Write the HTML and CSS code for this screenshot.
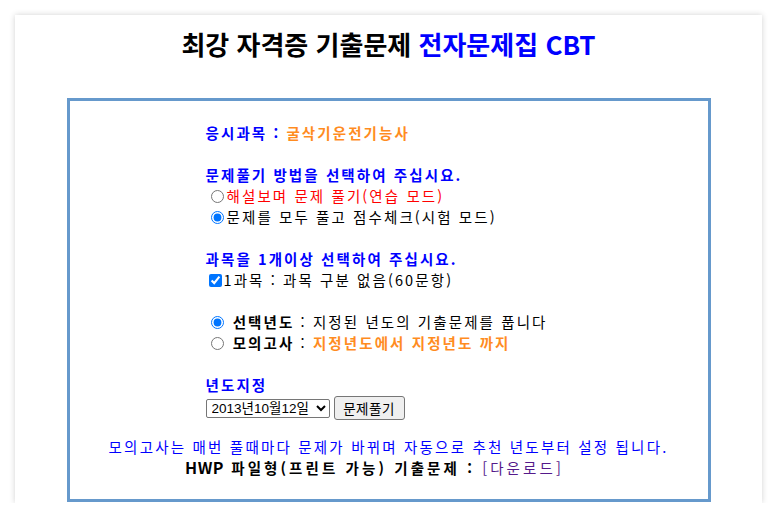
FILE: index.html
```html
<!DOCTYPE html>
<html lang="ko">
<head>
<meta charset="utf-8">
<title>최강 자격증 기출문제 전자문제집 CBT</title>
<link rel="stylesheet" href="styles.css">
</head>
<body>
<div class="card">
  <h1 class="title">최강 자격증 기출문제 <span class="blue">전자문제집 CBT</span></h1>
  <div class="box">
    <div class="form">
      <div class="line b blue">응시과목 : <span class="orange">굴삭기운전기능사</span></div>
      <div class="blank"></div>
      <div class="line b blue">문제풀기 방법을 선택하여 주십시요.</div>
      <div class="line"><input type="radio" name="mode"><span class="red">해설보며 문제 풀기(연습 모드)</span></div>
      <div class="line"><input type="radio" name="mode" checked>문제를 모두 풀고 점수체크(시험 모드)</div>
      <div class="blank"></div>
      <div class="line b blue">과목을 1개이상 선택하여 주십시요.</div>
      <div class="line chk"><input type="checkbox" checked>1과목 : 과목 구분 없음(60문항)</div>
      <div class="blank"></div>
      <div class="line"><input type="radio" name="kind" checked> <span class="b">선택년도</span> : 지정된 년도의 기출문제를 풉니다</div>
      <div class="line"><input type="radio" name="kind"> <span class="b">모의고사</span> : <span class="b orange">지정년도에서 지정년도 까지</span></div>
      <div class="blank"></div>
      <div class="line b blue">년도지정</div>
      <div class="ctrl">
        <select class="sel"><option>2013년10월12일</option></select>
        <button class="btn" type="button">문제풀기</button>
      </div>
    </div>
    <div class="note">모의고사는 매번 풀때마다 문제가 바뀌며 자동으로 추천 년도부터 설정 됩니다.</div>
    <div class="hwp"><span class="hwpt">HWP</span> 파일형(프린트 가능) 기출문제 : <a class="dl" href="#">[다운로드]</a></div>
  </div>
</div>
</body>
</html>
```

FILE: styles.css
```css
html, body {
  margin: 0;
  padding: 0;
  background: #ffffff;
}
body {
  font-family: "Noto Sans CJK KR", "Liberation Sans", sans-serif;
  font-size: 14.5px;
  letter-spacing: 2.1px;
  color: #000;
}
.card {
  margin: 15px 15px 0 15px;
  width: 747px;
  height: 488px;
  background: #fff;
  box-shadow: 0 0 6px rgba(0,0,0,0.18);
  box-sizing: border-box;
  padding-top: 14px;
}
.title {
  margin: 0;
  text-align: center;
  font-size: 26px;
  font-weight: bold;
  line-height: 30px;
  height: 30px;
  letter-spacing: 0;
}
.blue { color: #0000ff; }
.orange { color: #ff8c1f; }
.red { color: #ff0000; }
.b { font-weight: bold; }
.box {
  margin: 39px auto 0 auto;
  width: 644px;
  height: 404px;
  box-sizing: border-box;
  border: 3px solid #6699cc;
  padding-top: 21px;
}
.form {
  margin-left: 136px;
}
.line {
  height: 21px;
  line-height: 21px;
  white-space: nowrap;
}
.line input[type=radio] {
  margin: 0 3px 0 5px;
  width: 13px;
  height: 13px;
  vertical-align: -1px;
}
.chk input[type=checkbox] {
  margin: 0 2px 0 3px;
  width: 13px;
  height: 13px;
  vertical-align: -1px;
}
.blank { height: 21px; }
.ctrl {
  display: flex;
  align-items: center;
  gap: 4px;
  height: 24px;
  margin-top: 1px;
}
.sel {
  width: 124px;
  height: 19px;
  font-family: "Liberation Sans", "Noto Sans CJK KR", sans-serif;
  font-size: 13.5px;
  letter-spacing: 0;
  padding: 0 0 0 1px;
  border: 1px solid #767676;
  border-radius: 2px;
  background: #fff;
  color: #000;
}
.btn {
  width: 71px;
  height: 24px;
  font-family: "Noto Sans CJK KR", sans-serif;
  font-size: 13.5px;
  letter-spacing: 0.5px;
  padding: 0;
  border: 1px solid #767676;
  border-radius: 3px;
  background: #efefef;
  color: #000;
}
.note {
  margin-top: 16px;
  text-align: center;
  color: #0000ff;
  line-height: 21px;
  letter-spacing: 2.2px;
}
.hwp {
  text-align: center;
  font-weight: bold;
  line-height: 21px;
  letter-spacing: 3.1px;
  padding-right: 28px;
}
.hwpt {
  font-size: 16px;
  letter-spacing: 0.5px;
}
.dl {
  color: #551a8b;
  font-weight: normal;
  text-decoration: none;
}
```
